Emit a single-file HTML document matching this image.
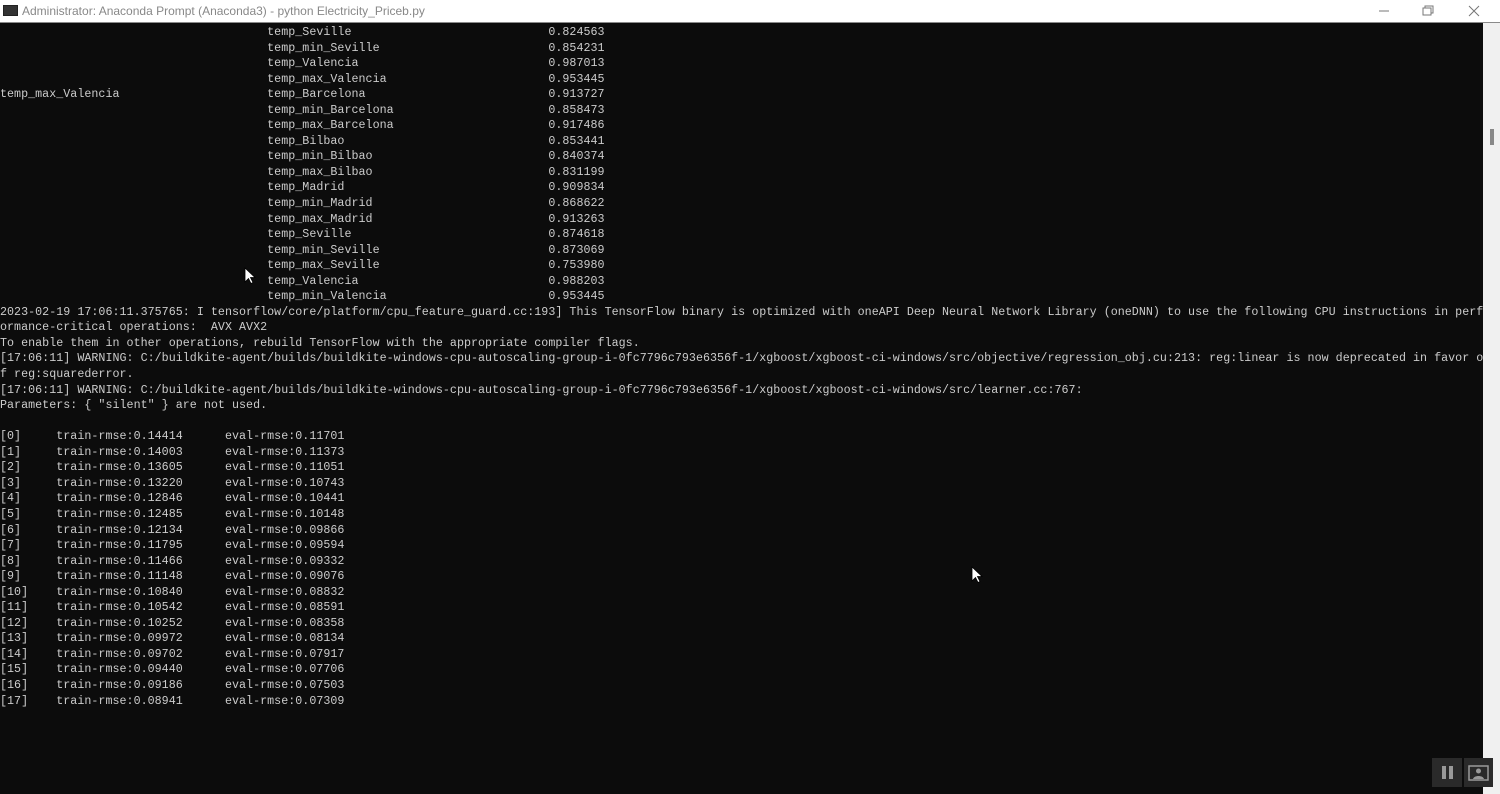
<!DOCTYPE html>
<html><head><meta charset="utf-8"><style>
html,body{margin:0;padding:0;width:1500px;height:794px;overflow:hidden;background:#0c0c0c}
#title{position:absolute;left:0;top:0;width:1500px;height:22px;background:#fff;border-bottom:1px solid #8a8a8a;font-family:"Liberation Sans",sans-serif;font-size:12px;color:#888;}
#title .t{position:absolute;left:22px;top:4px}
#title .ic{position:absolute;left:3px;top:5px;width:15px;height:11px;background:#333;border:1px solid #222;box-sizing:border-box}
#term{position:absolute;left:0;top:24px;width:1483px;height:770px;background:#0c0c0c;overflow:hidden}
pre{margin:0;padding-top:1px;font-family:"Liberation Mono",monospace;font-size:11.67px;letter-spacing:0.035px;line-height:15.55px;color:#cccccc;white-space:pre;tab-size:8}
#sb{position:absolute;left:1483px;top:23px;width:17px;height:771px;background:#f0f0f0}
#thumb{position:absolute;left:1490px;top:129px;width:4px;height:16px;background:#888}
.btn{position:absolute;top:758px;width:30px;height:29px;background:#2a2a2a}
</style></head><body>
<div id="title"><div class="ic"></div><span class="t">Administrator: Anaconda Prompt (Anaconda3) - python  Electricity_Priceb.py</span>
<svg style="position:absolute;left:1370px;top:0" width="130" height="22"><line x1="9" y1="11" x2="19" y2="11" stroke="#777" stroke-width="1"/><rect x="53" y="8" width="8" height="7" fill="none" stroke="#777"/><path d="M55 8V6h8v7h-2" fill="none" stroke="#777"/><path d="M99 6l10 10M109 6l-10 10" stroke="#777"/></svg>
</div>
<div id="term"><pre>                                      temp_Seville                            0.824563
                                      temp_min_Seville                        0.854231
                                      temp_Valencia                           0.987013
                                      temp_max_Valencia                       0.953445
temp_max_Valencia                     temp_Barcelona                          0.913727
                                      temp_min_Barcelona                      0.858473
                                      temp_max_Barcelona                      0.917486
                                      temp_Bilbao                             0.853441
                                      temp_min_Bilbao                         0.840374
                                      temp_max_Bilbao                         0.831199
                                      temp_Madrid                             0.909834
                                      temp_min_Madrid                         0.868622
                                      temp_max_Madrid                         0.913263
                                      temp_Seville                            0.874618
                                      temp_min_Seville                        0.873069
                                      temp_max_Seville                        0.753980
                                      temp_Valencia                           0.988203
                                      temp_min_Valencia                       0.953445
2023-02-19 17:06:11.375765: I tensorflow/core/platform/cpu_feature_guard.cc:193] This TensorFlow binary is optimized with oneAPI Deep Neural Network Library (oneDNN) to use the following CPU instructions in perf
ormance-critical operations:  AVX AVX2
To enable them in other operations, rebuild TensorFlow with the appropriate compiler flags.
[17:06:11] WARNING: C:/buildkite-agent/builds/buildkite-windows-cpu-autoscaling-group-i-0fc7796c793e6356f-1/xgboost/xgboost-ci-windows/src/objective/regression_obj.cu:213: reg:linear is now deprecated in favor o
f reg:squarederror.
[17:06:11] WARNING: C:/buildkite-agent/builds/buildkite-windows-cpu-autoscaling-group-i-0fc7796c793e6356f-1/xgboost/xgboost-ci-windows/src/learner.cc:767:
Parameters: { "silent" } are not used.

[0]     train-rmse:0.14414      eval-rmse:0.11701
[1]     train-rmse:0.14003      eval-rmse:0.11373
[2]     train-rmse:0.13605      eval-rmse:0.11051
[3]     train-rmse:0.13220      eval-rmse:0.10743
[4]     train-rmse:0.12846      eval-rmse:0.10441
[5]     train-rmse:0.12485      eval-rmse:0.10148
[6]     train-rmse:0.12134      eval-rmse:0.09866
[7]     train-rmse:0.11795      eval-rmse:0.09594
[8]     train-rmse:0.11466      eval-rmse:0.09332
[9]     train-rmse:0.11148      eval-rmse:0.09076
[10]    train-rmse:0.10840      eval-rmse:0.08832
[11]    train-rmse:0.10542      eval-rmse:0.08591
[12]    train-rmse:0.10252      eval-rmse:0.08358
[13]    train-rmse:0.09972      eval-rmse:0.08134
[14]    train-rmse:0.09702      eval-rmse:0.07917
[15]    train-rmse:0.09440      eval-rmse:0.07706
[16]    train-rmse:0.09186      eval-rmse:0.07503
[17]    train-rmse:0.08941      eval-rmse:0.07309</pre></div>
<div id="sb"></div><div id="thumb"></div>
<div class="btn" style="left:1432px"><svg width="30" height="29"><rect x="10" y="8" width="4" height="13" fill="#999"/><rect x="17" y="8" width="4" height="13" fill="#999"/></svg></div>
<div class="btn" style="left:1464px;width:29px"><svg width="29" height="29"><rect x="5" y="8" width="19" height="14" fill="none" stroke="#999" stroke-width="1.5"/><circle cx="14.5" cy="13" r="2.5" fill="#999"/><path d="M9 21c1-4 10-4 11 0z" fill="#999"/></svg></div>
<svg style="position:absolute;left:244px;top:267px" width="12" height="18"><path d="M1 1v14l3.5-3.5 2.5 5 2-1-2.5-5H11z" fill="#fff" stroke="#000" stroke-width="0.8"/></svg>
<svg style="position:absolute;left:971px;top:566px" width="12" height="18"><path d="M1 1v14l3.5-3.5 2.5 5 2-1-2.5-5H11z" fill="#fff" stroke="#000" stroke-width="0.8"/></svg>
</body></html>
